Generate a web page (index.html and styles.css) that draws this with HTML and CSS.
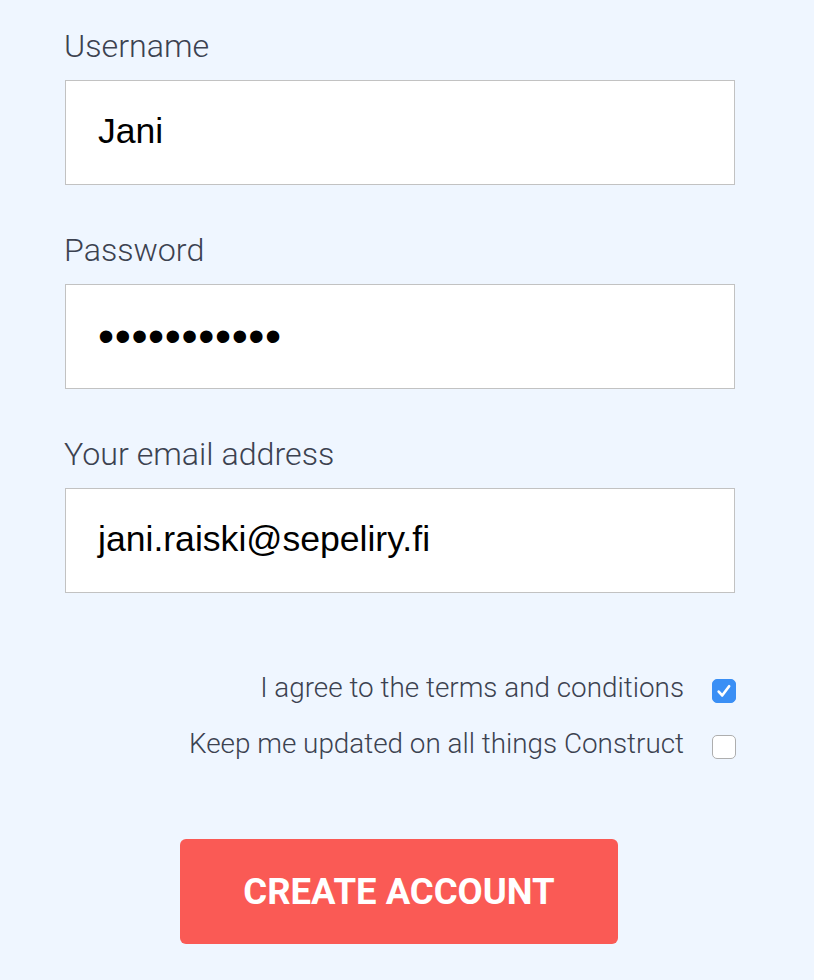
FILE: index.html
```html
<!DOCTYPE html>
<html>
<head>
<meta charset="utf-8">
<link rel="stylesheet" href="styles.css">
</head>
<body>
<form class="form">
  <div class="field">
    <div class="label">Username</div>
    <div class="input"><span class="value">Jani</span></div>
  </div>
  <div class="field">
    <div class="label">Password</div>
    <div class="input"><span class="dots">•••••••••••</span></div>
  </div>
  <div class="field">
    <div class="label">Your email address</div>
    <div class="input"><span class="value">jani.raiski@sepeliry.fi</span></div>
  </div>
  <div class="checks">
    <div class="check-row">
      <span class="check-text">I agree to the terms and conditions</span>
      <span class="box checked">
        <svg width="24" height="24" viewBox="0 0 24 24"><path d="M6.2 12.6 L10 16.9 L17.6 6.8" fill="none" stroke="#fff" stroke-width="2.9" stroke-linecap="round" stroke-linejoin="round"/></svg>
      </span>
    </div>
    <div class="check-row">
      <span class="check-text">Keep me updated on all things Construct</span>
      <span class="box"></span>
    </div>
  </div>
  <div class="actions">
    <div class="button">CREATE ACCOUNT</div>
  </div>
</form>
</body>
</html>
```

FILE: styles.css
```css
html, body {
  margin: 0;
  padding: 0;
  background: #eff6ff;
}
body {
  width: 814px;
  height: 980px;
  overflow: hidden;
}
.form {
  width: 670px;
  margin-left: 65px;
  padding-top: 28px;
  display: flex;
  flex-direction: column;
}
.field {
  display: flex;
  flex-direction: column;
  margin-bottom: 47px;
}
.field:nth-child(3) {
  margin-bottom: 0;
}
.label {
  font-family: Roboto, sans-serif;
  font-weight: 300;
  font-size: 32.2px;
  line-height: 36px;
  color: #3c4250;
  margin-left: -1px;
  margin-bottom: 16px;
}
.input {
  box-sizing: border-box;
  height: 105px;
  background: #fff;
  border: 1px solid #c2c2c2;
  display: flex;
  align-items: center;
  padding-left: 32px;
}
.value {
  font-family: "Liberation Sans", Arial, sans-serif;
  font-size: 35.6px;
  color: #000;
  position: relative;
  top: -1px;
}
.dots {
  font-family: "Liberation Sans", Arial, sans-serif;
  font-size: 46px;
  letter-spacing: 0.6px;
  color: #000;
  position: relative;
  top: -1px;
}
.checks {
  margin-top: 78px;
  display: flex;
  flex-direction: column;
  gap: 16px;
}
.check-row {
  height: 40px;
  display: flex;
  align-items: center;
  justify-content: flex-end;
}
.check-text {
  font-family: Roboto, sans-serif;
  font-weight: 300;
  font-size: 27.85px;
  line-height: 32px;
  color: #3c4250;
  margin-right: 28px;
  position: relative;
  top: -3px;
}
.box {
  box-sizing: border-box;
  width: 24px;
  height: 24px;
  border-radius: 5px;
  border: 1px solid #aeaeae;
  background: #fff;
  display: flex;
  align-items: center;
  justify-content: center;
  margin-right: -1px;
}
.box.checked {
  background: #3a8ff5;
  border-color: #3a8ff5;
}
.box svg {
  display: block;
}
.actions {
  margin-top: 72px;
  display: flex;
  justify-content: center;
}
.button {
  width: 438px;
  height: 105px;
  border-radius: 6px;
  background: #fa5a55;
  color: #fff;
  font-family: Roboto, sans-serif;
  font-weight: 700;
  font-size: 36.5px;
  display: flex;
  align-items: center;
  justify-content: center;
  margin-left: -2px;
}
```
